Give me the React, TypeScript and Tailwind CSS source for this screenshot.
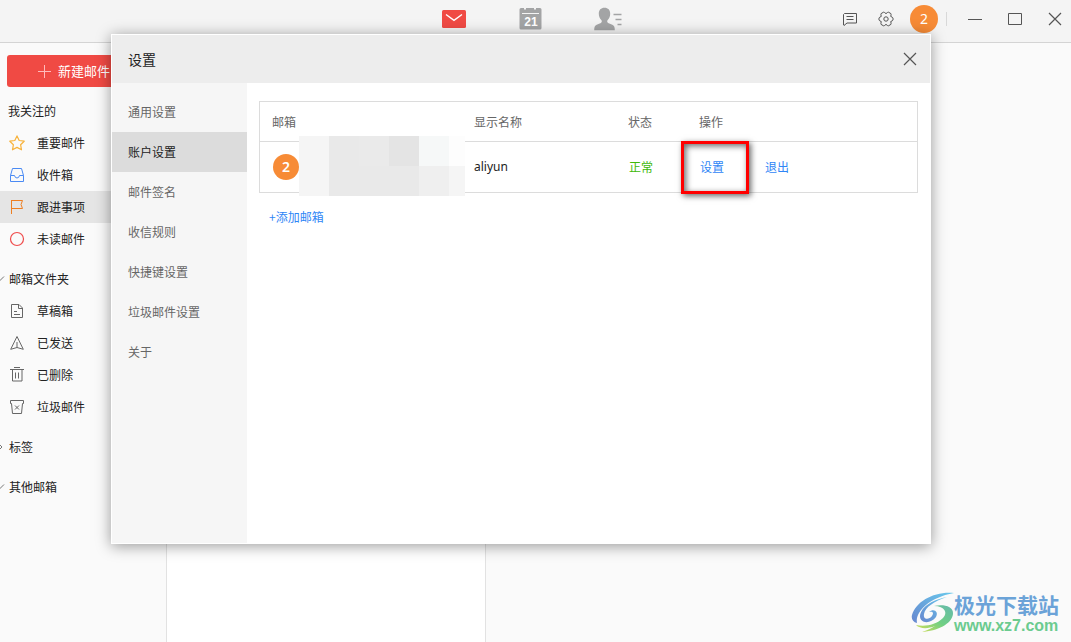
import type { ReactNode } from 'react';
import clsx from 'clsx';

const FONT = "font-['Noto_Sans_CJK_SC','Noto_Sans',sans-serif]";

const Icon = ({ children, size = 16 }: { children: ReactNode; size?: number }) => (
  <svg
    width={size}
    height={size}
    viewBox={`0 0 ${size} ${size}`}
    fill="none"
    stroke="currentColor"
    className="shrink-0"
    aria-hidden="true"
  >
    {children}
  </svg>
);

const StarIcon = () => (
  <Icon>
    <path
      d="M8 .9l2.2 4.6 5 .7-3.6 3.500.9 5.100L8 12.400l-4.500 2.400.9-5.100L.8 6.200l5-.7z"
      strokeWidth="1.200"
      strokeLinejoin="round"
    />
  </Icon>
);

const InboxIcon = () => (
  <Icon>
    <path d="M3.500 1.500h9l2 7v6h-13v-6z" strokeLinejoin="round" />
    <path d="M1.500 8.500h4q.5 2.500 2.500 2.500t2.500-2.500h4" />
  </Icon>
);

const FlagIcon = () => (
  <Icon>
    <path d="M2.500 1v14M2.500 1.500h11l-1.500 4 1.500 4h-11" />
  </Icon>
);

const CircleIcon = () => (
  <Icon>
    <circle cx="8" cy="8" r="6.500" strokeWidth="1.200" />
  </Icon>
);

const DraftIcon = () => (
  <Icon>
    <path d="M2.500 1.500h7.500l3.500 3.500v9.500h-11zM9.500 1.500v4h4M5 8.500h3M5 11.500h6" />
  </Icon>
);

const SentIcon = () => (
  <Icon>
    <path d="M8 1.500L14.300 14.300 8 12.500 1.700 14.300zM8 7v5.500" strokeLinejoin="round" />
  </Icon>
);

const TrashIcon = () => (
  <Icon>
    <path d="M1 2.500h14M5 .5h6M3.500 2.500v11.500h9.500v-11.500M6.500 5.500v6M9.500 5.500v6" />
  </Icon>
);

const JunkIcon = () => (
  <Icon>
    <path d="M1.500 1.500h13v3h-1l-1 10h-9l-1-10h-1zM6 6.500l4 4M10 6.500l-4 4" strokeLinejoin="round" />
  </Icon>
);

const CloseIcon = () => (
  <Icon>
    <path d="M2 2l12 12M14 2L2 14" strokeWidth="1.200" />
  </Icon>
);

const MailIcon = () => (
  <svg width="24" height="18" viewBox="0 0 24 18" aria-hidden="true">
    <rect width="24" height="18" rx="1.500" fill="#f04a44" />
    <path d="M4 4.500l8 5.800 8-5.800" fill="none" stroke="#fff" strokeWidth="1.400" />
  </svg>
);

const CalendarIcon = () => (
  <svg width="24" height="24" viewBox="0 0 24 24" aria-hidden="true">
    <path
      d="M3 1h3v1.500h2V1h8v1.500h2V1h4q1.500 0 1.500 1.500V21q0 1.500-1.500 1.500H3Q1.500 22.500 1.500 21V2.500Q1.500 1 3 1z"
      fill="#a3a4a5"
    />
    <path d="M4 6.500h17" stroke="#f4f4f4" />
    <text
      x="13"
      y="19"
      textAnchor="middle"
      fill="#fff"
      fontSize="12"
      fontWeight="700"
      fontFamily="Liberation Sans, sans-serif"
    >
      21
    </text>
  </svg>
);

const ContactsIcon = () => (
  <svg width="28" height="24" viewBox="0 0 28 24" aria-hidden="true">
    <path
      d="M10.500.8c3.600 0 5.700 2.300 5.700 6 0 2.600-.9 4.800-2.500 6.200-.8.800-.7 2.300.4 2.900l4.200 1.800c1.800.8 2.500 2.200 2.500 5.500H.2c0-3.300.7-4.700 2.500-5.500l4.200-1.800c1.100-.6 1.200-2.100.4-2.900C5.700 11.600 4.800 9.400 4.800 6.800c0-3.700 2.100-6 5.700-6z"
      fill="#a3a4a5"
    />
    <path d="M19.500 7.500h8M21.500 12.500h6M23.500 17.500h4" stroke="#a3a4a5" strokeWidth="1.700" />
  </svg>
);

const ChatIcon = () => (
  <Icon>
    <path d="M2.500 2.500h12v9.500H5l-3 2.500-.5-.5V3.500zM4.500 5.500h7M4.500 8.500h7" strokeLinejoin="round" />
  </Icon>
);

const GearIcon = () => (
  <Icon>
    <path
      d="M5.500 1.200L6.600 1.500Q8 3.800 9.400 1.500L10.500 1.200 12.900 2.600 13.100 3.700Q11.800 6 14.300 6.200L15 7V9L14.300 9.800Q11.800 10 13.100 12.300L12.900 13.400 10.500 14.800 9.400 14.500Q8 12.200 6.600 14.500L5.500 14.800 3.100 13.400 2.900 12.300Q4.200 10 1.700 9.800L1 9V7L1.700 6.200Q4.200 6 2.900 3.700L3.100 2.600z"
      strokeLinejoin="round"
    />
    <circle cx="8" cy="8" r="2.200" />
  </Icon>
);

const followed = [
  { label: '重要邮件', icon: <StarIcon />, color: 'text-[#f7b23c]' },
  { label: '收件箱', icon: <InboxIcon />, color: 'text-[#4a8af4]' },
  { label: '跟进事项', icon: <FlagIcon />, color: 'text-[#ee7f22]', active: true },
  { label: '未读邮件', icon: <CircleIcon />, color: 'text-[#ef4b4b]' },
];

const folders = [
  { label: '草稿箱', icon: <DraftIcon />, color: 'text-[#666]' },
  { label: '已发送', icon: <SentIcon />, color: 'text-[#666]' },
  { label: '已删除', icon: <TrashIcon />, color: 'text-[#666]' },
  { label: '垃圾邮件', icon: <JunkIcon />, color: 'text-[#666]' },
];

const settingTabs = ['通用设置', '账户设置', '邮件签名', '收信规则', '快捷键设置', '垃圾邮件设置', '关于'];

// colours of the blocks that hide the address
const maskRows = [
  ['bg-[#f5f5f5]', 'bg-[#e9e9e9]', 'bg-[#eaeaea]', 'bg-[#e4e4e4]', 'bg-[#f6f8f8]', 'bg-[#fdfdfd]'],
  ['bg-[#f5f5f5]', 'bg-[#e9e9e9]', 'bg-[#e9e9e9]', 'bg-[#e9e9e9]', 'bg-[#efefef]', 'bg-[#f5f5f5]'],
];

type Folder = { label: string; icon: ReactNode; color: string; active?: boolean };

const FolderItem = ({ label, icon, color, active }: Folder) => (
  <button
    className={clsx('flex h-8 w-full items-center gap-3 pl-[9px] text-left', active && 'bg-[#e5e5e5]')}
  >
    <span className={color}>{icon}</span>
    {label}
  </button>
);

const FolderGroup = ({ label, open }: { label: string; open?: boolean }) => (
  <button className="mt-2 flex h-8 w-full items-center text-left">
    <svg width="9" height="10" viewBox="0 0 9 10" fill="none" stroke="#777" aria-hidden="true">
      <path d={open ? 'M-4 2.500L0 6.500l4-4' : 'M-2 1l4 4-4 4'} />
    </svg>
    {label}
  </button>
);

const TopBar = () => (
  <header className="grid h-[43px] grid-cols-[1fr_auto_1fr] border-b border-[#d4d4d4] bg-[#f4f4f4] pr-2">
    <div />
    <nav className="flex h-[37px] items-center gap-[52px]">
      <button aria-label="邮件"><MailIcon /></button>
      <button aria-label="日历"><CalendarIcon /></button>
      <button aria-label="联系人"><ContactsIcon /></button>
    </nav>
    <div className="flex h-[38px] items-center justify-end text-[#555]">
      <button aria-label="反馈" className="mr-5"><ChatIcon /></button>
      <button aria-label="设置" className="mr-4"><GearIcon /></button>
      <button className="size-7 rounded-full bg-[#f78b36] font-['Noto_Sans',sans-serif] text-sm text-white">
        2
      </button>
      <span className="mr-5 ml-2 h-3.5 w-px bg-[#d8d8d8]" />
      <div className="flex gap-6">
        <button aria-label="最小化">
          <Icon><path d="M1 8.500h14" /></Icon>
        </button>
        <button aria-label="最大化">
          <Icon><path d="M1.500 2.500h13v11h-13z" /></Icon>
        </button>
        <button aria-label="关闭"><CloseIcon /></button>
      </div>
    </div>
  </header>
);

const Sidebar = () => (
  <aside className="w-[167px] shrink-0 border-r border-[#e2e2e2] bg-[#fafafa] pt-3">
    <div className="px-[7px]">
      <button className="flex h-8 w-full items-center gap-[7px] rounded-[3px] bg-[#f04a44] pl-[31px] text-[13px] text-white">
        <svg width="13" height="13" viewBox="0 0 13 13" stroke="#fbb" aria-hidden="true">
          <path d="M6.500 0v13M0 6.500h13" />
        </svg>
        新建邮件
      </button>
    </div>
    <h2 className="mt-2 flex h-8 items-center pl-2">我关注的</h2>
    {followed.map((item) => (
      <FolderItem key={item.label} {...item} />
    ))}
    <FolderGroup label="邮箱文件夹" open />
    {folders.map((item) => (
      <FolderItem key={item.label} {...item} />
    ))}
    <FolderGroup label="标签" />
    <FolderGroup label="其他邮箱" open />
  </aside>
);

const AccountTable = () => (
  <table className="w-full table-fixed border-separate border-spacing-0 border border-[#dcdcdc] text-left">
    <colgroup>
      <col className="w-[202px]" />
      <col className="w-[154px]" />
      <col className="w-[71px]" />
      <col />
    </colgroup>
    <thead>
      <tr className="h-10 text-[#666]">
        {['邮箱', '显示名称', '状态', '操作'].map((name) => (
          <th key={name} className="border-b border-[#dcdcdc] pl-3 font-normal">{name}</th>
        ))}
      </tr>
    </thead>
    <tbody>
      <tr className="h-[50px]">
        <td className="relative pl-[13px]">
          <span className="flex size-[26px] items-center justify-center rounded-full bg-[#f78b36] font-['Noto_Sans',sans-serif] text-sm font-semibold text-white">
            2
          </span>
          <div className="absolute -top-1.5 left-[39px]">
            {maskRows.map((row, i) => (
              <div key={i} className="flex">
                {row.map((color, j) => (
                  <span key={j} className={clsx('h-[30px]', color, j === 5 ? 'w-4' : 'w-[30px]')} />
                ))}
              </div>
            ))}
          </div>
        </td>
        <td className="pl-3 font-['Noto_Sans',sans-serif]">aliyun</td>
        <td className="pl-[13px] text-[#3fb90b]">正常</td>
        <td className="pl-[13px] text-[#2f86f6]">
          <div className="flex gap-[41px]">
            <button className="relative">
              设置
              <span className="absolute -top-[18px] -left-[19px] h-[53px] w-[68px] border-[3px] border-[#f00] shadow-[2px_2px_6px_rgba(0,0,0,0.6),inset_2px_2px_6px_rgba(0,0,0,0.6)]" />
            </button>
            <button>退出</button>
          </div>
        </td>
      </tr>
    </tbody>
  </table>
);

const SettingsDialog = () => (
  <div className="absolute inset-0 flex pt-[34px] pr-[140px] pb-[98px] pl-[111px]">
    <section
      role="dialog"
      aria-labelledby="settings-title"
      className="flex flex-1 flex-col border border-white bg-white shadow-[0_2px_14px_rgba(0,0,0,0.4)]"
    >
      <div className="flex h-12 items-center justify-between bg-[#ededed] pr-3 pl-4">
        <h1 id="settings-title" className="text-sm">设置</h1>
        <button aria-label="关闭" className="text-[#555]"><CloseIcon /></button>
      </div>
      <div className="flex flex-1">
        <nav className="w-[135px] shrink-0 bg-[#f6f6f6] pt-[9px]">
          {settingTabs.map((tab) => (
            <button
              key={tab}
              className={clsx(
                'block h-10 w-full pl-4 text-left',
                tab === '账户设置' ? 'bg-[#dcdcdc] text-[#222]' : 'text-[#666]'
              )}
            >
              {tab}
            </button>
          ))}
        </nav>
        <div className="min-w-0 flex-1 px-3 pt-[18px]">
          <AccountTable />
          <button className="mt-4 ml-2.5 text-[#2f86f6]">+添加邮箱</button>
        </div>
      </div>
    </section>
  </div>
);

const Watermark = () => (
  <div className="absolute right-2.5 bottom-1.5 flex items-start">
    <svg width="43" height="42" viewBox="0 0 43 42" aria-hidden="true">
      <defs>
        <linearGradient id="swirl-blue" x1="0" y1="1" x2="1" y2="0">
          <stop offset="0" stopColor="#6787cf" />
          <stop offset="1" stopColor="#68c9ec" />
        </linearGradient>
        <linearGradient id="swirl-green" x1="0" y1="1" x2="1" y2="0">
          <stop offset="0" stopColor="#d9df55" />
          <stop offset=".5" stopColor="#6fcf83" />
          <stop offset="1" stopColor="#66b9ae" />
        </linearGradient>
      </defs>
      <path d="M43 1C24-1 5 9 1 23c-1 4 1 7 5 8C4 21 16 6 43 1z" fill="url(#swirl-blue)" />
      <path
        d="M36 5C24 7 10 14 9 24c0 8 11 8 16 1 3-5-2-9-7-5 4-1 5 1 3 4-3 4-9 4-8-2 1-7 11-13 23-17z"
        fill="url(#swirl-blue)"
      />
      <path
        d="M23 14c7-2 20-1 19 8-1 10-16 17-31 18 6-2 10-4 13-6-7 3-15 3-19-1 9 2 20 0 27-7 5-5 2-12-9-12z"
        fill="url(#swirl-green)"
      />
    </svg>
    <div className="flex w-[107px] flex-col">
      <span className="text-[21px] leading-[24px] font-bold whitespace-nowrap text-[#6ba3d8]">极光下载站</span>
      <span className="font-['Liberation_Sans',sans-serif] text-[16px] leading-[20px] font-bold text-[#6bcb8f]">
        www.xz7.com
      </span>
    </div>
  </div>
);

const App = () => {
  return (
    <div className={clsx(FONT, 'relative flex min-h-screen flex-col overflow-hidden text-xs text-[#222]')}>
      <TopBar />
      <main className="flex flex-1">
        <Sidebar />
        <section className="w-[319px] shrink-0 border-r border-[#e2e2e2] bg-white" />
        <section className="flex-1 bg-[#fafafa]" />
      </main>
      <SettingsDialog />
      <Watermark />
    </div>
  );
};

export default App;
